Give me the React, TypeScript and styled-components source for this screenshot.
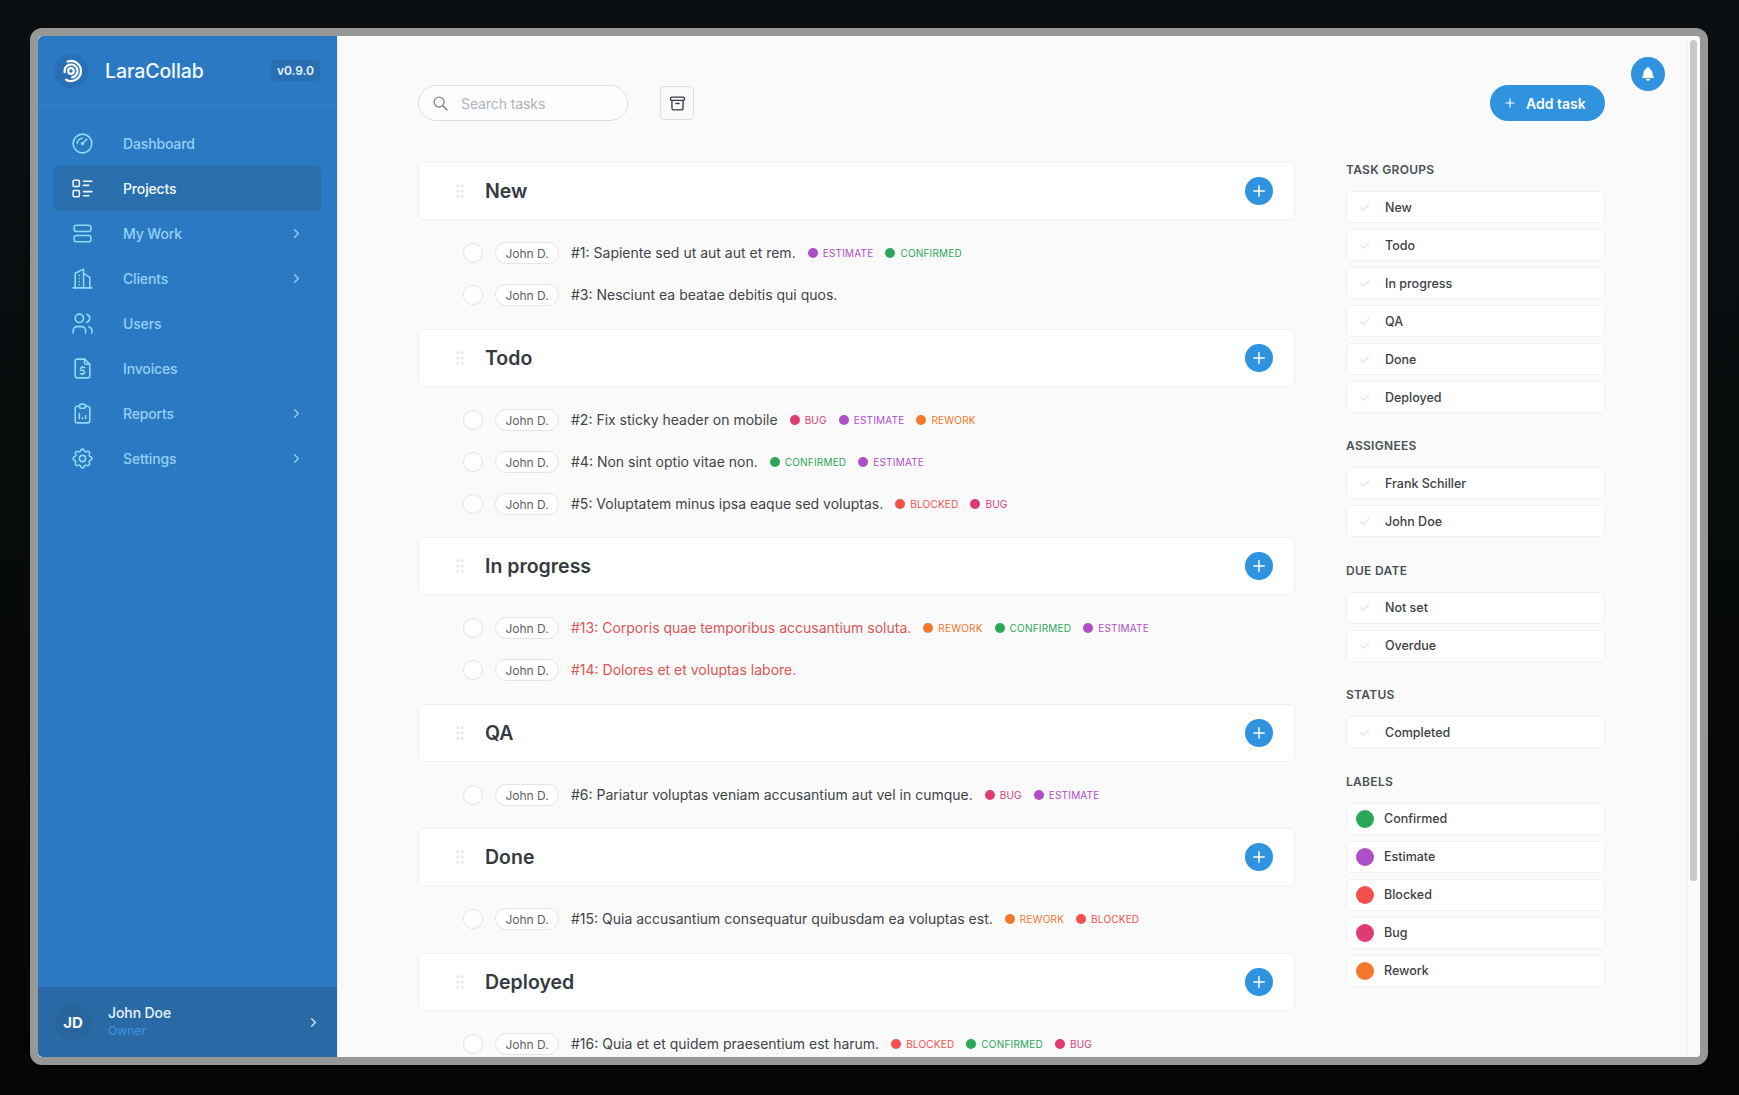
import React from 'react';
import styled, { createGlobalStyle } from 'styled-components';
import {
  TbArchive,
  TbBellFilled,
  TbBuildingSkyscraper,
  TbCheck,
  TbChevronRight,
  TbFileDollar,
  TbGauge,
  TbGripVertical,
  TbLayoutList,
  TbListDetails,
  TbPlus,
  TbReportAnalytics,
  TbSearch,
  TbSettings,
  TbUsers,
} from 'react-icons/tb';

type LabelName = 'Confirmed' | 'Estimate' | 'Blocked' | 'Bug' | 'Rework';

const labelColors: Record<LabelName, string> = {
  Confirmed: '#2aa858',
  Estimate: '#ae4fc8',
  Blocked: '#f5504d',
  Bug: '#e03a72',
  Rework: '#f5772b',
};

const nav = [
  { name: 'Dashboard', icon: TbGauge },
  { name: 'Projects', icon: TbListDetails, active: true },
  { name: 'My Work', icon: TbLayoutList, more: true },
  { name: 'Clients', icon: TbBuildingSkyscraper, more: true },
  { name: 'Users', icon: TbUsers },
  { name: 'Invoices', icon: TbFileDollar },
  { name: 'Reports', icon: TbReportAnalytics, more: true },
  { name: 'Settings', icon: TbSettings, more: true },
];

const groups: {
  name: string;
  tasks: { title: string; overdue?: boolean; labels: LabelName[] }[];
}[] = [
  {
    name: 'New',
    tasks: [
      { title: '#1: Sapiente sed ut aut aut et rem.', labels: ['Estimate', 'Confirmed'] },
      { title: '#3: Nesciunt ea beatae debitis qui quos.', labels: [] },
    ],
  },
  {
    name: 'Todo',
    tasks: [
      { title: '#2: Fix sticky header on mobile', labels: ['Bug', 'Estimate', 'Rework'] },
      { title: '#4: Non sint optio vitae non.', labels: ['Confirmed', 'Estimate'] },
      { title: '#5: Voluptatem minus ipsa eaque sed voluptas.', labels: ['Blocked', 'Bug'] },
    ],
  },
  {
    name: 'In progress',
    tasks: [
      {
        title: '#13: Corporis quae temporibus accusantium soluta.',
        overdue: true,
        labels: ['Rework', 'Confirmed', 'Estimate'],
      },
      { title: '#14: Dolores et et voluptas labore.', overdue: true, labels: [] },
    ],
  },
  {
    name: 'QA',
    tasks: [
      { title: '#6: Pariatur voluptas veniam accusantium aut vel in cumque.', labels: ['Bug', 'Estimate'] },
    ],
  },
  {
    name: 'Done',
    tasks: [
      { title: '#15: Quia accusantium consequatur quibusdam ea voluptas est.', labels: ['Rework', 'Blocked'] },
    ],
  },
  {
    name: 'Deployed',
    tasks: [
      { title: '#16: Quia et et quidem praesentium est harum.', labels: ['Blocked', 'Confirmed', 'Bug'] },
    ],
  },
];

const filters = [
  { title: 'Task groups', items: ['New', 'Todo', 'In progress', 'QA', 'Done', 'Deployed'] },
  { title: 'Assignees', items: ['Frank Schiller', 'John Doe'] },
  { title: 'Due date', items: ['Not set', 'Overdue'] },
  { title: 'Status', items: ['Completed'] },
];

const labelNames: LabelName[] = ['Confirmed', 'Estimate', 'Blocked', 'Bug', 'Rework'];

export default function App() {
  return (
    <>
      <GlobalStyle />
      <Frame>
        <Sidebar>
          <Brand>
            <LogoMark>
              <svg width="24" height="24" viewBox="0 0 24 24" fill="none" stroke="#fff" strokeWidth="2.2" strokeLinecap="round">
                <circle cx="12" cy="12" r="2.8" />
                <path d="M5.6 13.1A6.5 6.5 0 1 1 13.1 18.4" />
                <path d="M8.6 2.6A10 10 0 1 1 7 20.7" />
              </svg>
            </LogoMark>
            <BrandName>LaraCollab</BrandName>
            <Version>v0.9.0</Version>
          </Brand>
          <Nav>
            {nav.map(({ name, icon: Icon, active, more }) => (
              <NavItem key={name} $active={active}>
                <NavIcon $active={active}>
                  <Icon size={25} strokeWidth={1.5} />
                </NavIcon>
                <NavLabel>{name}</NavLabel>
                {more && <TbChevronRight size={15} />}
              </NavItem>
            ))}
          </Nav>
          <UserBar>
            <Avatar>JD</Avatar>
            <UserText>
              <UserName>John Doe</UserName>
              <UserRole>Owner</UserRole>
            </UserText>
            <TbChevronRight size={15} color="#d6ecff" />
          </UserBar>
        </Sidebar>
        <Main>
          <Scroller>
            <Page>
              <Board>
                <Toolbar>
                  <SearchBox>
                    <TbSearch size={17} color="#868e96" />
                    <SearchInput placeholder="Search tasks" readOnly />
                  </SearchBox>
                  <ArchiveButton>
                    <TbArchive size={19} strokeWidth={1.7} />
                  </ArchiveButton>
                </Toolbar>
                {groups.map((group) => (
                  <section key={group.name}>
                    <GroupHeader>
                      <Grip>
                        <TbGripVertical size={18} />
                      </Grip>
                      <GroupName>{group.name}</GroupName>
                      <RoundAdd>
                        <TbPlus size={18} strokeWidth={2} />
                      </RoundAdd>
                    </GroupHeader>
                    <TaskList>
                      {group.tasks.map((task) => (
                        <Task key={task.title}>
                          <Tick />
                          <Assignee>John D.</Assignee>
                          <TaskTitle $overdue={task.overdue}>{task.title}</TaskTitle>
                          <Labels>
                            {task.labels.map((label) => (
                              <TaskLabel key={label} $color={labelColors[label]}>
                                {label}
                              </TaskLabel>
                            ))}
                          </Labels>
                        </Task>
                      ))}
                    </TaskList>
                  </section>
                ))}
              </Board>
              <Side>
                <AddTask>
                  <TbPlus size={14} />
                  Add task
                </AddTask>
                {filters.map((section) => (
                  <FilterSection key={section.title}>
                    <FilterTitle>{section.title}</FilterTitle>
                    {section.items.map((item) => (
                      <FilterItem key={item}>
                        <CheckSlot>
                          <TbCheck size={13} />
                        </CheckSlot>
                        {item}
                      </FilterItem>
                    ))}
                  </FilterSection>
                ))}
                <FilterSection>
                  <FilterTitle>Labels</FilterTitle>
                  {labelNames.map((label) => (
                    <FilterItem key={label}>
                      <LabelDot $color={labelColors[label]} />
                      {label}
                    </FilterItem>
                  ))}
                </FilterSection>
              </Side>
            </Page>
          </Scroller>
          <BellButton>
            <TbBellFilled size={16} />
          </BellButton>
          <ScrollTrack>
            <ScrollThumb />
          </ScrollTrack>
        </Main>
      </Frame>
    </>
  );
}

const GlobalStyle = createGlobalStyle`
  html, body, #root {
    height: 100%;
  }

  body {
    margin: 0;
    background: linear-gradient(#0b0f11, #040505);
    font-family: Inter, "Noto Sans", sans-serif;
    color: #343a40;
    overflow: hidden;
  }

  * {
    box-sizing: border-box;
  }
`;

const Frame = styled.div`
  position: fixed;
  inset: 28px 31px 30px 30px;
  display: flex;
  border: 8px solid #979797;
  border-radius: 12px;
  overflow: hidden;
  background: #fafafa;
`;

const Sidebar = styled.aside`
  width: 299px;
  flex: none;
  display: flex;
  flex-direction: column;
  background: #2b79c2;
  border-radius: 5px 0 0 5px;
  overflow: hidden;
`;

const Brand = styled.div`
  height: 69px;
  flex: none;
  display: flex;
  align-items: center;
  padding: 0 17px 0 16px;
  border-bottom: 1px solid #317fc8;
`;

const LogoMark = styled.div`
  width: 34px;
  height: 34px;
  margin-top: 2px;
  flex: none;
  display: flex;
  align-items: center;
  justify-content: center;
  border-radius: 50%;
  background: #296fb3;
`;

const BrandName = styled.div`
  flex: 1;
  margin: 2px 0 0 17px;
  font-size: 19.5px;
  font-weight: 500;
  letter-spacing: -0.1px;
  color: #f2f9ff;
`;

const Version = styled.div`
  padding: 3px 6px;
  border-radius: 4px;
  background: #296fb3;
  font-size: 12px;
  font-weight: 600;
  line-height: 15px;
  color: #e8f4ff;
`;

const Nav = styled.nav`
  flex: 1;
  display: flex;
  flex-direction: column;
  padding: 16px 16px 0;
`;

const NavItem = styled.div<{ $active?: boolean }>`
  height: 45px;
  display: flex;
  align-items: center;
  padding: 0 17px 0 16px;
  border-radius: 4px;
  font-size: 14px;
  font-weight: 500;
  letter-spacing: -0.15px;
  color: ${({ $active }) => ($active ? '#f2f9ff' : '#94d0fa')};
  background: ${({ $active }) => ($active ? '#296fae' : 'transparent')};
`;

const NavIcon = styled.span<{ $active?: boolean }>`
  width: 25px;
  height: 25px;
  margin-right: 28px;
  display: flex;
  color: ${({ $active }) => ($active ? '#f2f9ff' : '#94d8ff')};
`;

const NavLabel = styled.span`
  flex: 1;
`;

const UserBar = styled.div`
  height: 70px;
  flex: none;
  display: flex;
  align-items: center;
  padding: 0 16px 0 17px;
  background: #2869a6;
`;

const Avatar = styled.div`
  width: 36px;
  height: 36px;
  display: flex;
  align-items: center;
  justify-content: center;
  border-radius: 50%;
  background: #2a649c;
  font-size: 15px;
  font-weight: 700;
  color: #f2f9ff;
`;

const UserText = styled.div`
  flex: 1;
  margin-left: 17px;
  padding-bottom: 2px;
`;

const UserName = styled.div`
  font-size: 14px;
  font-weight: 500;
  line-height: 19px;
  letter-spacing: -0.1px;
  color: #eaf5ff;
`;

const UserRole = styled.div`
  font-size: 12px;
  font-weight: 500;
  line-height: 18px;
  color: #3d8fd8;
`;

const Main = styled.main`
  flex: 1;
  min-width: 0;
  position: relative;
  border-left: 1px solid #e9f1f8;
`;

const Scroller = styled.div`
  height: 100%;
  overflow: hidden;
`;

const Page = styled.div`
  display: flex;
  gap: 51px;
  margin-left: 80px;
  padding-top: 49px;
`;

const Board = styled.div`
  width: 877px;
  flex: none;
`;

const Toolbar = styled.div`
  height: 77px;
  display: flex;
  align-items: flex-start;
  gap: 32px;
`;

const SearchBox = styled.label`
  width: 210px;
  height: 36px;
  display: flex;
  align-items: center;
  gap: 12px;
  padding: 0 13px;
  border: 1px solid #dcdcdc;
  border-radius: 18px;
  background: #fdfdfd;
`;

const SearchInput = styled.input`
  width: 130px;
  border: 0;
  outline: 0;
  padding: 0;
  background: transparent;
  font: 400 14px Inter, sans-serif;
  letter-spacing: -0.1px;

  &::placeholder {
    color: #adb5bd;
  }
`;

const ArchiveButton = styled.div`
  width: 34px;
  height: 34px;
  margin-top: 1px;
  display: flex;
  align-items: center;
  justify-content: center;
  border: 1px solid #dedede;
  border-radius: 4px;
  color: #343a40;
`;

const GroupHeader = styled.div`
  height: 58px;
  display: flex;
  align-items: center;
  padding: 0 21px 0 32px;
  border: 1px solid #f1f1f1;
  border-radius: 5px;
  background: #fff;
`;

const Grip = styled.span`
  width: 18px;
  height: 18px;
  margin-right: 16px;
  display: flex;
  color: #e4e6e8;
`;

const GroupName = styled.h2`
  flex: 1;
  margin: 0;
  font-size: 19.5px;
  font-weight: 600;
  color: #343a40;
`;

const RoundAdd = styled.div`
  width: 28px;
  height: 28px;
  display: flex;
  align-items: center;
  justify-content: center;
  border-radius: 50%;
  background: #2f93e0;
  color: #fff;
`;

const TaskList = styled.div`
  padding: 12px 0 12.6px;
`;

const Task = styled.div`
  height: 42px;
  display: flex;
  align-items: center;
  padding-left: 45px;
`;

const Tick = styled.span`
  width: 20px;
  height: 20px;
  flex: none;
  border: 1px solid #e0e3e6;
  border-radius: 50%;
  background: #fff;
`;

const Assignee = styled.span`
  width: 64px;
  height: 22px;
  flex: none;
  margin-left: 12px;
  padding-top: 1px;
  display: flex;
  align-items: center;
  justify-content: center;
  border: 1px solid #e5e5e5;
  border-radius: 11px;
  background: #fff;
  font-size: 12px;
  color: #5c5f66;
`;

const TaskTitle = styled.span<{ $overdue?: boolean }>`
  margin-left: 12px;
  padding-bottom: 1px;
  font-size: 14px;
  white-space: nowrap;
  color: ${({ $overdue }) => ($overdue ? '#dd5555' : '#404549')};
`;

const Labels = styled.span`
  display: flex;
  gap: 12px;
  margin-left: 12px;
`;

const TaskLabel = styled.span<{ $color: string }>`
  display: flex;
  align-items: center;
  gap: 5px;
  font-size: 10px;
  font-weight: 400;
  letter-spacing: 0.2px;
  text-transform: uppercase;
  color: ${({ $color }) => $color};

  &::before {
    content: '';
    width: 10px;
    height: 10px;
    border-radius: 50%;
    background: ${({ $color }) => $color};
  }
`;

const Side = styled.div`
  width: 259px;
  flex: none;
`;

const AddTask = styled.div`
  width: 115px;
  height: 36px;
  margin: 0 0 40px auto;
  padding-left: 13px;
  display: flex;
  align-items: center;
  gap: 9px;
  border-radius: 18px;
  background: #2f93e0;
  font-size: 14px;
  font-weight: 600;
  color: #fff;
`;

const FilterSection = styled.div`
  margin-bottom: 24.4px;
`;

const FilterTitle = styled.h3`
  margin: 0 0 12px;
  font-size: 12px;
  font-weight: 600;
  line-height: 18px;
  letter-spacing: 0.3px;
  text-transform: uppercase;
  color: #495057;
`;

const FilterItem = styled.div`
  height: 32px;
  margin-bottom: 6px;
  display: flex;
  align-items: center;
  padding-left: 9px;
  border: 1px solid #f1f1f1;
  border-radius: 5px;
  background: #fff;
  font-size: 12.5px;
  font-weight: 500;
  color: #3c4146;
`;

const CheckSlot = styled.span`
  width: 29px;
  display: flex;
  padding-left: 2px;
  color: #dee2e6;
`;

const LabelDot = styled.span<{ $color: string }>`
  width: 18px;
  height: 18px;
  margin-right: 10px;
  border-radius: 50%;
  background: ${({ $color }) => $color};
`;

const BellButton = styled.div`
  position: absolute;
  top: 21px;
  right: 35px;
  width: 34px;
  height: 34px;
  display: flex;
  align-items: center;
  justify-content: center;
  border-radius: 50%;
  background: #2f93e0;
  color: #fff;
`;

const ScrollTrack = styled.div`
  position: absolute;
  top: 0;
  right: 0;
  bottom: 0;
  width: 14px;
  padding: 4px 3px 0 3px;
  background: #fafafa;
  border-left: 1px solid #eeeeee;
`;

const ScrollThumb = styled.div`
  height: 841px;
  border-radius: 4px;
  background: #c8c8c8;
`;
